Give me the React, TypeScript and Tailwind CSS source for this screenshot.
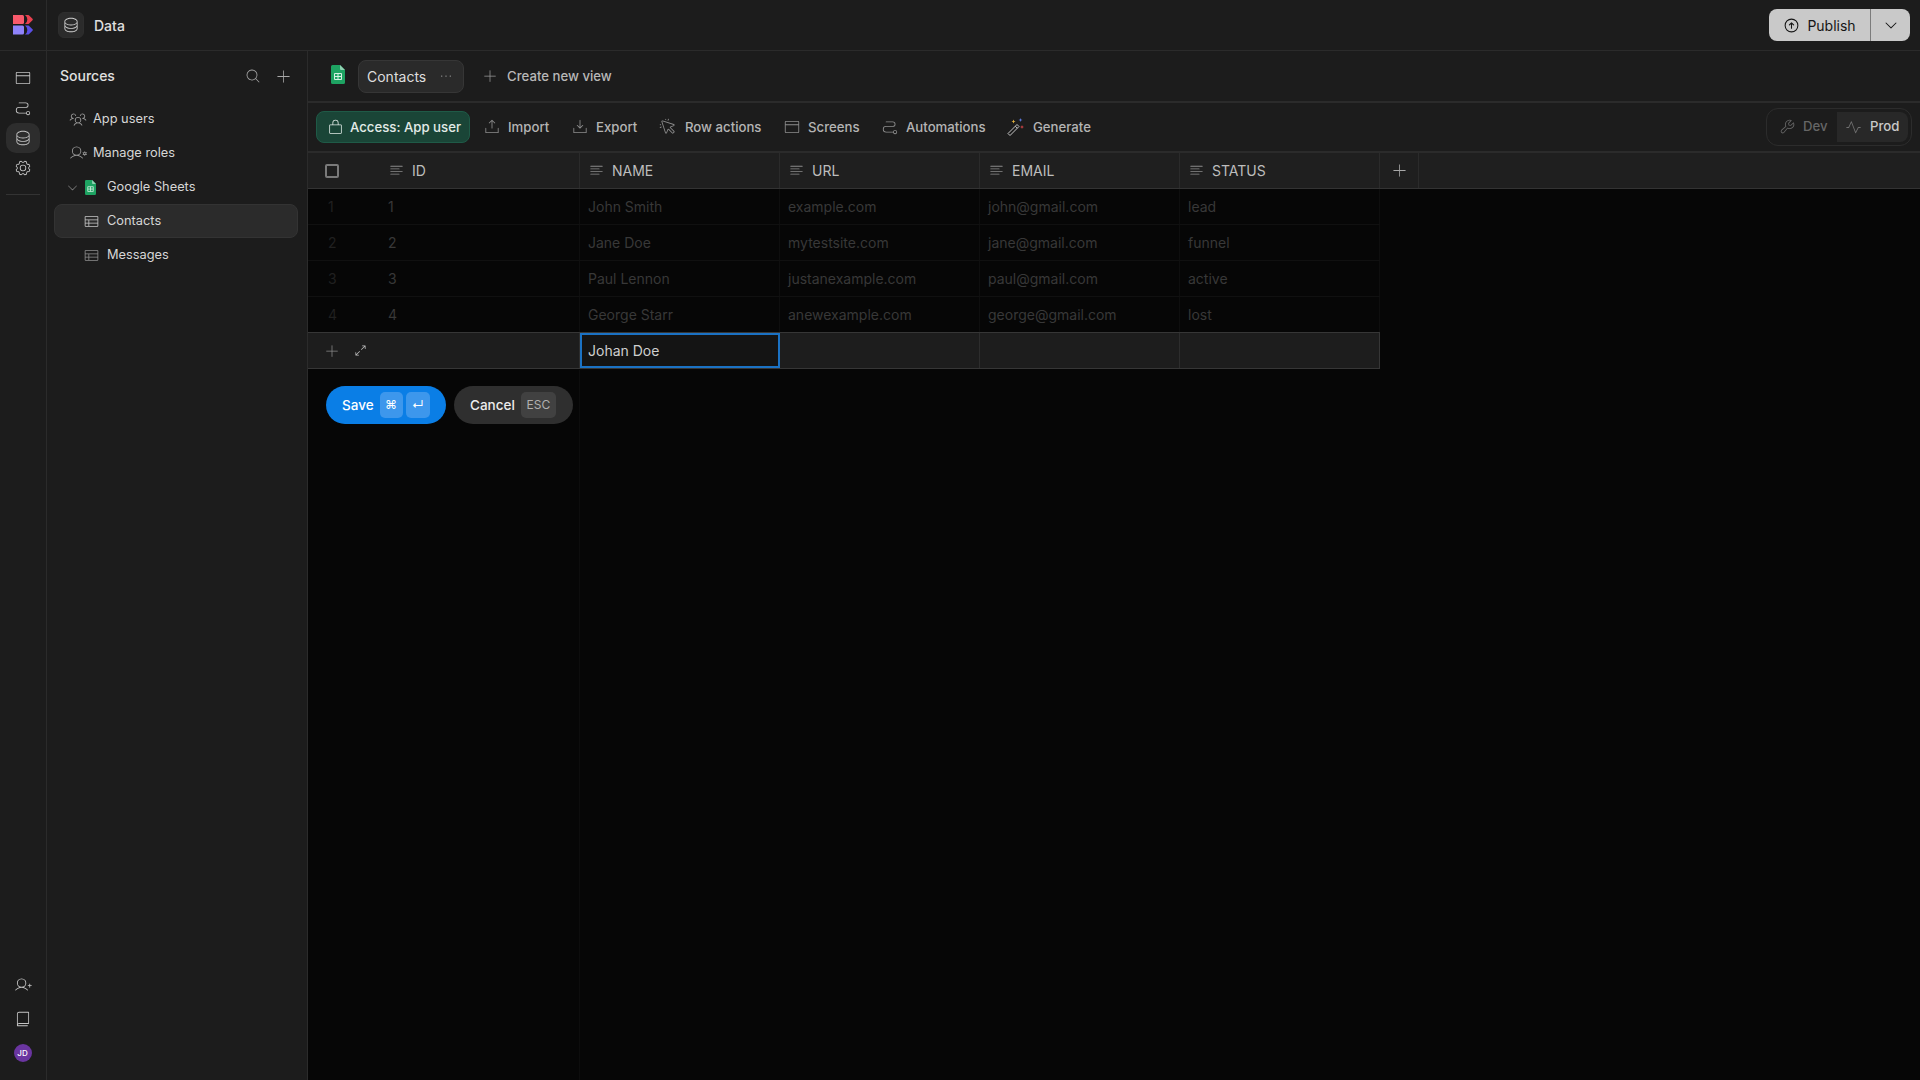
import React from 'react'
import {
  PiArrowCircleUp,
  PiArrowsOutSimpleLight,
  PiBookLight,
  PiBrowserLight,
  PiCaretDown,
  PiCaretDownLight,
  PiCursorClickLight,
  PiDatabaseLight,
  PiDotsThreeLight,
  PiDownloadSimpleLight,
  PiGearLight,
  PiLockSimpleLight,
  PiMagnifyingGlassLight,
  PiPathLight,
  PiPlusLight,
  PiPulseLight,
  PiTableLight,
  PiTextAlignLeftLight,
  PiUploadSimpleLight,
  PiUserGearLight,
  PiUserPlusLight,
  PiUsersThreeLight,
  PiWrenchLight,
} from 'react-icons/pi'

const Logo = () => (
  <svg width="20" height="20" viewBox="0 0 20 20">
    <path d="M0 0h9.500a1.500 1.500 0 0 1 1.500 1.500v6a1.500 1.500 0 0 1-1.500 1.500H0z" fill="#f95a6c" />
    <path d="M12 0h3.200a1 1 0 0 1 .7.300l3.600 3.500a1 1 0 0 1 0 1.400l-3.600 3.500a1 1 0 0 1-.7.300H12a5.500 5.500 0 0 0 0-9z" fill="#e8404f" />
    <path d="M0 10.500h9.500a1.500 1.500 0 0 1 1.500 1.500v6a1.500 1.500 0 0 1-1.500 1.500H0z" fill="#8f83fb" />
    <path d="M12 10.500h3.200a1 1 0 0 1 .7.300l3.600 3.500a1 1 0 0 1 0 1.400l-3.600 3.500a1 1 0 0 1-.7.300H12a5.500 5.500 0 0 0 0-9z" fill="#5a4fe6" />
  </svg>
)

const SheetsIcon = ({ w, h }: { w: number; h: number }) => (
  <svg width={w} height={h} viewBox="0 0 14 19">
    <path d="M1.500 0H9l5 5v12.500a1.500 1.500 0 0 1-1.500 1.500h-11A1.500 1.500 0 0 1 0 17.500V1.500A1.500 1.500 0 0 1 1.500 0z" fill="#1ea362" />
    <path d="M9 0l5 5H10a1 1 0 0 1-1-1z" fill="#8ed1b1" />
    <path d="M3.500 8.500h7v6h-7zM7 8.500v6M3.500 11.500h7" fill="none" stroke="#d5efe2" strokeWidth="1" />
  </svg>
)

const WandIcon = () => (
  <svg width="18" height="18" viewBox="0 0 18 18">
    <path d="M1 15.500l9-9 2 2-9 9zM8.300 8.200l2 2" fill="none" stroke="#c4c4c4" strokeWidth="1" />
    <path d="M6.500 1.500l.6 1.400 1.400.6-1.400.6-.6 1.400-.6-1.400-1.400-.6 1.400-.6z" fill="#e3b341" />
    <path d="M13.500 0l.5 1.500 1.500.5-1.500.5-.5 1.500-.5-1.500-1.500-.5 1.500-.5z" fill="#5f7fe8" />
    <path d="M15 7l.5 1.500 1.500.5-1.500.5-.5 1.500-.5-1.500-1.500-.5 1.500-.5z" fill="#e5484d" />
  </svg>
)

const SidebarRow = ({ icon, label, className }: { icon: React.ReactNode; label: string; className: string }) => (
  <div className={`flex h-[34px] items-center ${className}`}>
    {icon}
    <span className="text-[12.800px] text-[#d6d6d6]">{label}</span>
  </div>
)

const ACTIONS = [
  { label: 'Import', icon: <PiUploadSimpleLight size={18} />, className: 'w-[88px] gap-[7px]' },
  { label: 'Export', icon: <PiDownloadSimpleLight size={18} />, className: 'w-[88px] gap-[7px]' },
  { label: 'Row actions', icon: <PiCursorClickLight size={18} />, className: 'w-[124px] gap-[8px]' },
  { label: 'Screens', icon: <PiBrowserLight size={18} />, className: 'w-[98px] gap-[7px]' },
  { label: 'Automations', icon: <PiPathLight size={18} />, className: 'w-[126px] gap-[7px]' },
]

const ROWS = [
  ['1', '1', 'John Smith', 'example.com', 'john@gmail.com', 'lead'],
  ['2', '2', 'Jane Doe', 'mytestsite.com', 'jane@gmail.com', 'funnel'],
  ['3', '3', 'Paul Lennon', 'justanexample.com', 'paul@gmail.com', 'active'],
  ['4', '4', 'George Starr', 'anewexample.com', 'george@gmail.com', 'lost'],
]

const HeaderCell = ({ label, className }: { label: string; className: string }) => (
  <div className={`flex items-center ${className}`}>
    <PiTextAlignLeftLight size={17} className="text-[#8c8c8c]" />
    <span className="ml-[7px] text-sm text-[#bdbdbd]">{label}</span>
  </div>
)

const Kbd = ({ children, className }: { children: React.ReactNode; className: string }) => (
  <span className={`flex h-[26px] items-center justify-center rounded-[5px] text-xs ${className}`}>{children}</span>
)

export default function App() {
  return (
    <div className="flex h-screen w-full flex-col overflow-hidden bg-[#1c1c1c] font-['Inter',sans-serif]">
      {/* top bar */}
      <div className="flex h-[51px] shrink-0 border-b border-[#2b2b2b]">
        <div className="flex w-[47px] items-center justify-center border-r border-[#2b2b2b] pr-[1px]">
          <Logo />
        </div>
        <div className="flex flex-1 items-center pl-[11px] pr-[10px]">
          <div className="flex h-[26px] w-[26px] items-center justify-center rounded-md border border-[#2e2e2e] bg-[#2b2b2b] text-[#cfcfcf]">
            <PiDatabaseLight size={18} />
          </div>
          <span className="ml-[10px] pt-[1px] text-sm font-medium text-[#e0e0e0]">Data</span>
          <div className="ml-auto flex h-8 items-center rounded-lg bg-[#c9c9c9] text-[#151515]">
            <div className="flex h-full w-[102px] items-center justify-center gap-[7px] border-r border-[#7c7c7c]">
              <PiArrowCircleUp size={17} />
              <span className="pt-[1px] text-sm">Publish</span>
            </div>
            <div className="flex w-[39px] justify-center">
              <PiCaretDown size={16} />
            </div>
          </div>
        </div>
      </div>

      <div className="flex min-h-0 flex-1">
        {/* icon rail */}
        <div className="flex w-[47px] shrink-0 flex-col items-center border-r border-[#2b2b2b] pb-[18px] pr-[1px] pt-[12px] text-[#c4c4c4]">
          <div className="flex h-[30px] w-[34px] items-center justify-center">
            <PiBrowserLight size={18} />
          </div>
          <div className="flex h-[30px] w-[34px] items-center justify-center">
            <PiPathLight size={18} />
          </div>
          <div className="flex h-[30px] w-[34px] items-center justify-center rounded-[10px] bg-[#2d2d2d]">
            <PiDatabaseLight size={18} />
          </div>
          <div className="flex h-[30px] w-[34px] items-center justify-center">
            <PiGearLight size={18} />
          </div>
          <div className="mt-[11px] w-[34px] border-t border-[#333]" />
          <div className="mt-auto flex flex-col items-center gap-[16px]">
            <PiUserPlusLight size={18} />
            <PiBookLight size={18} />
            <div className="flex h-[18px] w-[18px] items-center justify-center rounded-full bg-[#6a35a0] text-[8px] font-medium text-white">
              JD
            </div>
          </div>
        </div>

        {/* sources sidebar */}
        <div className="w-[261px] shrink-0 border-r border-[#2b2b2b] pl-[7px] pr-[9px] pt-[10px]">
          <div className="flex h-[30px] items-center pl-[6px] pr-[6px]">
            <span className="text-sm font-medium text-[#e0e0e0]">Sources</span>
            <PiMagnifyingGlassLight size={16} className="ml-auto text-[#a8a8a8]" />
            <PiPlusLight size={17} className="ml-[14px] text-[#a8a8a8]" />
          </div>
          <div className="mt-[11px] flex flex-col">
            <SidebarRow className="pl-[15px]" label="App users" icon={<PiUsersThreeLight size={18} className="mr-[6px] text-[#999]" />} />
            <SidebarRow className="pl-[15px]" label="Manage roles" icon={<PiUserGearLight size={18} className="mr-[6px] text-[#999]" />} />
            <SidebarRow
              className="pl-[12px]"
              label="Google Sheets"
              icon={
                <>
                  <PiCaretDownLight size={13} className="mr-[6px] text-[#999]" />
                  <span className="mr-[11px] flex">
                    <SheetsIcon w={11} h={15} />
                  </span>
                </>
              }
            />
            <SidebarRow
              className="rounded-lg border border-[#333] bg-[#2b2b2b] pl-[28px]"
              label="Contacts"
              icon={<PiTableLight size={17} className="mr-[7px] text-[#c9c9c9]" />}
            />
            <SidebarRow className="pl-[29px]" label="Messages" icon={<PiTableLight size={17} className="mr-[7px] text-[#8e8e8e]" />} />
          </div>
        </div>

        {/* main */}
        <div className="flex min-w-0 flex-1 flex-col">
          <div className="flex h-[52px] shrink-0 items-center border-b-2 border-[#2b2b2b] pl-[23px]">
            <span className="mb-[3px] flex">
              <SheetsIcon w={14} h={19} />
            </span>
            <div className="ml-[13px] flex h-[33px] w-[106px] items-center rounded-lg border border-[#363636] bg-[#2a2a2a] pl-2 text-[#dedede]">
              <span className="pt-[1px] text-sm">Contacts</span>
              <PiDotsThreeLight size={16} className="ml-auto mr-[9px] text-[#b0b0b0]" />
            </div>
            <PiPlusLight size={16} className="ml-[18px] text-[#999]" />
            <span className="ml-[9px] pt-[1px] text-[13.200px] font-medium text-[#b8b8b8]">Create new view</span>
          </div>

          <div className="flex h-[50px] shrink-0 items-center border-b-2 border-[#2b2b2b] pl-[8px]">
            <div className="flex h-[32px] w-[154px] items-center rounded-lg border border-[#1f5a47] bg-[#1a4537] pl-[10px] text-[#e2ebe7]">
              <PiLockSimpleLight size={17} />
              <span className="ml-[6px] pt-[1px] text-[13.200px] font-medium">Access: App user</span>
            </div>
            <div className="ml-[13px] flex items-center text-[#b4b4b4]">
              {ACTIONS.map((action) => (
                <div key={action.label} className={`flex items-center ${action.className}`}>
                  <span className="text-[#8d8d8d]">{action.icon}</span>
                  <span className="pt-[1px] text-[13.200px] font-medium">{action.label}</span>
                </div>
              ))}
              <div className="flex items-center gap-[8px]">
                <WandIcon />
                <span className="pt-[1px] text-[13.200px] font-medium">Generate</span>
              </div>
            </div>
            <div className="ml-auto mr-[8px] flex h-[38px] w-[146px] items-center rounded-xl border border-[#2c2c2c] p-[3px] text-[13.200px] font-medium">
              <div className="flex flex-1 items-center gap-[7px] pl-[9px] text-[#666]">
                <PiWrenchLight size={17} />
                Dev
              </div>
              <div className="flex h-full w-[71px] items-center gap-[8px] rounded-r-lg bg-[#282828] pl-[8px] text-[#c8c8c8]">
                <PiPulseLight size={17} className="text-[#707070]" />
                Prod
              </div>
            </div>
          </div>

          {/* table header */}
          <div className="flex h-[36px] shrink-0 border-b border-[#333] bg-[#1f1f1f]">
            <div className="flex w-[272px] items-center border-r border-[#2b2b2b] pl-[17px]">
              <div className="h-[14px] w-[14px] rounded-[2px] border-2 border-[#7a7a7a]" />
              <HeaderCell label="ID" className="ml-[49px]" />
            </div>
            {['NAME', 'URL', 'EMAIL', 'STATUS'].map((label) => (
              <HeaderCell key={label} label={label} className="w-[200px] border-r border-[#2b2b2b] pl-[8px]" />
            ))}
            <div className="flex w-[39px] items-center justify-center border-r border-[#2b2b2b] text-[#a8a8a8]">
              <PiPlusLight size={17} />
            </div>
          </div>

          {/* table body */}
          <div className="flex min-h-0 flex-1 flex-col bg-[#060606]">
            {ROWS.map((row) => (
              <div key={row[0]} className="flex h-9 w-[1072px] shrink-0 items-center border-b border-[#101010] text-sm text-[#383838]">
                <div className="flex h-full w-[272px] items-center border-r border-[#0e0e0e]">
                  <span className="w-[80px] pl-[20px] text-[#202020]">{row[0]}</span>
                  <span>{row[1]}</span>
                </div>
                {row.slice(2).map((cell) => (
                  <div key={cell} className="flex h-full w-[200px] items-center border-r border-[#0e0e0e] pl-2">
                    {cell}
                  </div>
                ))}
              </div>
            ))}
            <div className="flex h-[37px] w-[1072px] shrink-0 -translate-y-px border border-l-0 border-[#363636] bg-[#1d1d1d]">
              <div className="flex w-[272px] items-center border-r border-[#2d2d2d] pl-[16px]">
                <PiPlusLight size={16} className="text-[#8a8a8a]" />
                <PiArrowsOutSimpleLight size={15} className="ml-[13px] text-[#c4c4c4]" />
              </div>
              <div className="flex w-[200px] items-center border-2 border-[#1b72c4] bg-[#141414] pl-[6px] text-sm text-[#cfcfcf]">
                Johan Doe
              </div>
              <div className="w-[200px] border-r border-[#2d2d2d]" />
              <div className="w-[200px] border-r border-[#2d2d2d]" />
              <div className="w-[199px]" />
            </div>
            <div className="flex w-[272px] flex-1 items-start gap-2 border-r border-[#0d0d0d] pl-[18px] pt-[16px]">
              <div className="flex h-[38px] w-[120px] items-center rounded-[19px] bg-[#0a7ee6] pl-4 text-white">
                <span className="text-[13.500px] font-medium">Save</span>
                <Kbd className="ml-[6px] w-[23px] bg-[#3d97ec]">⌘</Kbd>
                <Kbd className="ml-[3px] w-[24px] bg-[#3d97ec]">↵</Kbd>
              </div>
              <div className="flex h-[38px] w-[119px] items-center rounded-[19px] bg-[#2f2f2f] pl-4 text-[#ececec]">
                <span className="text-[13.500px] font-medium">Cancel</span>
                <Kbd className="ml-[6px] w-[35px] bg-[#414141] text-[#b0b0b0]">ESC</Kbd>
              </div>
            </div>
          </div>
        </div>
      </div>
    </div>
  )
}
